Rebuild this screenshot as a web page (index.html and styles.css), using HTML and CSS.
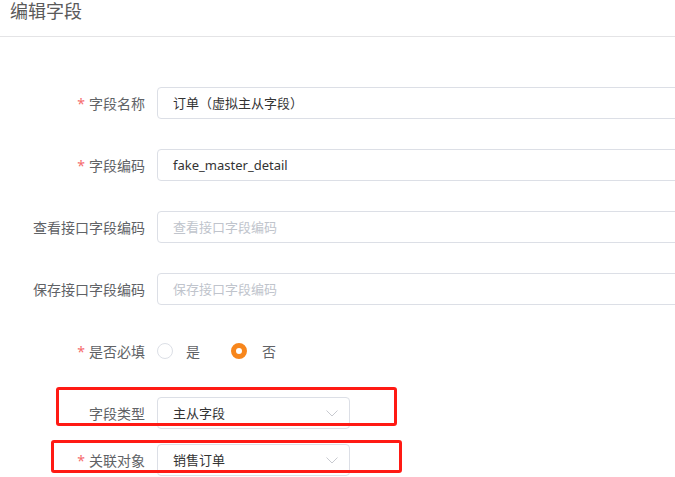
FILE: index.html
```html
<!DOCTYPE html>
<html lang="zh">
<head>
<meta charset="utf-8">
<title>编辑字段</title>
<link rel="stylesheet" href="styles.css">
</head>
<body>
<div class="page">
  <div class="header">编辑字段</div>
  <form class="form">
    <div class="row">
      <label class="label"><span class="req">*</span>字段名称</label>
      <div class="input">订单（虚拟主从字段）</div>
    </div>
    <div class="row">
      <label class="label"><span class="req">*</span>字段编码</label>
      <div class="input">fake_master_detail</div>
    </div>
    <div class="row">
      <label class="label">查看接口字段编码</label>
      <div class="input placeholder">查看接口字段编码</div>
    </div>
    <div class="row">
      <label class="label">保存接口字段编码</label>
      <div class="input placeholder">保存接口字段编码</div>
    </div>
    <div class="row">
      <label class="label"><span class="req">*</span>是否必填</label>
      <div class="radios">
        <span class="radio"><span class="dot"></span><span class="rtext">是</span></span>
        <span class="radio checked"><span class="dot"></span><span class="rtext">否</span></span>
      </div>
    </div>
    <div class="row row-type">
      <label class="label">字段类型</label>
      <div class="select">主从字段<svg class="chev" width="12" height="7" viewBox="0 0 12 7"><polyline points="0.5,0.5 6,6 11.5,0.5" fill="none" stroke="#c8cad0" stroke-width="1"/></svg></div>
    </div>
    <div class="row row-obj">
      <label class="label"><span class="req">*</span>关联对象</label>
      <div class="select">销售订单<svg class="chev" width="12" height="7" viewBox="0 0 12 7"><polyline points="0.5,0.5 6,6 11.5,0.5" fill="none" stroke="#c8cad0" stroke-width="1"/></svg></div>
    </div>
  </form>
  <div class="mark mark1"></div>
  <div class="mark mark2"></div>
</div>
</body>
</html>
```
FILE: styles.css
```css
html, body {
  margin: 0;
  padding: 0;
  background: #fff;
}
body {
  overflow: hidden;
  width: 675px;
  height: 477px;
  font-family: "Noto Sans", "Noto Sans CJK SC", sans-serif;
}
.page {
  position: relative;
  width: 675px;
  height: 477px;
  overflow: hidden;
}
.header {
  height: 37px;
  box-sizing: border-box;
  padding-left: 10px;
  font-size: 18px;
  line-height: 22px;
  color: #5a5a5a;
  border-bottom: 1px solid #e4e4e6;
}
.form {
  padding-top: 50px;
}
.row {
  display: flex;
  align-items: center;
  height: 32px;
  margin-bottom: 30px;
}
.row-type {
  margin-bottom: 15px;
}
.label {
  width: 145px;
  flex: none;
  text-align: right;
  font-size: 14px;
  color: #606266;
  margin-right: 12px;
}
.req {
  color: #f56c6c;
  margin-right: 4px;
}
.input {
  flex: none;
  width: 560px;
  height: 32px;
  box-sizing: border-box;
  border: 1px solid #dcdfe6;
  border-radius: 4px;
  padding-left: 15px;
  font-size: 13px;
  line-height: 30px;
  color: #333;
}
.input.placeholder {
  color: #c0c4cc;
}
.radios {
  display: flex;
  align-items: center;
}
.radio {
  display: flex;
  align-items: center;
  margin-right: 31px;
  font-size: 14px;
  color: #606266;
}
.dot {
  width: 16px;
  height: 16px;
  box-sizing: border-box;
  border: 1px solid #dcdfe6;
  border-radius: 50%;
  margin-right: 13px;
}
.radio.checked .dot {
  border: 5px solid #f7861c;
  margin-right: 15px;
}
.select {
  flex: none;
  position: relative;
  width: 193px;
  height: 32px;
  box-sizing: border-box;
  border: 1px solid #dcdfe6;
  border-radius: 4px;
  padding-left: 15px;
  font-size: 13px;
  line-height: 30px;
  color: #333;
}
.chev {
  position: absolute;
  right: 11px;
  top: 12px;
}
.mark {
  position: absolute;
  border: 3px solid #ff1a14;
  border-radius: 3px;
  box-sizing: border-box;
}
.mark1 {
  left: 56px;
  top: 387px;
  width: 341px;
  height: 39px;
}
.mark2 {
  left: 51px;
  top: 440px;
  width: 351px;
  height: 33px;
}
```
